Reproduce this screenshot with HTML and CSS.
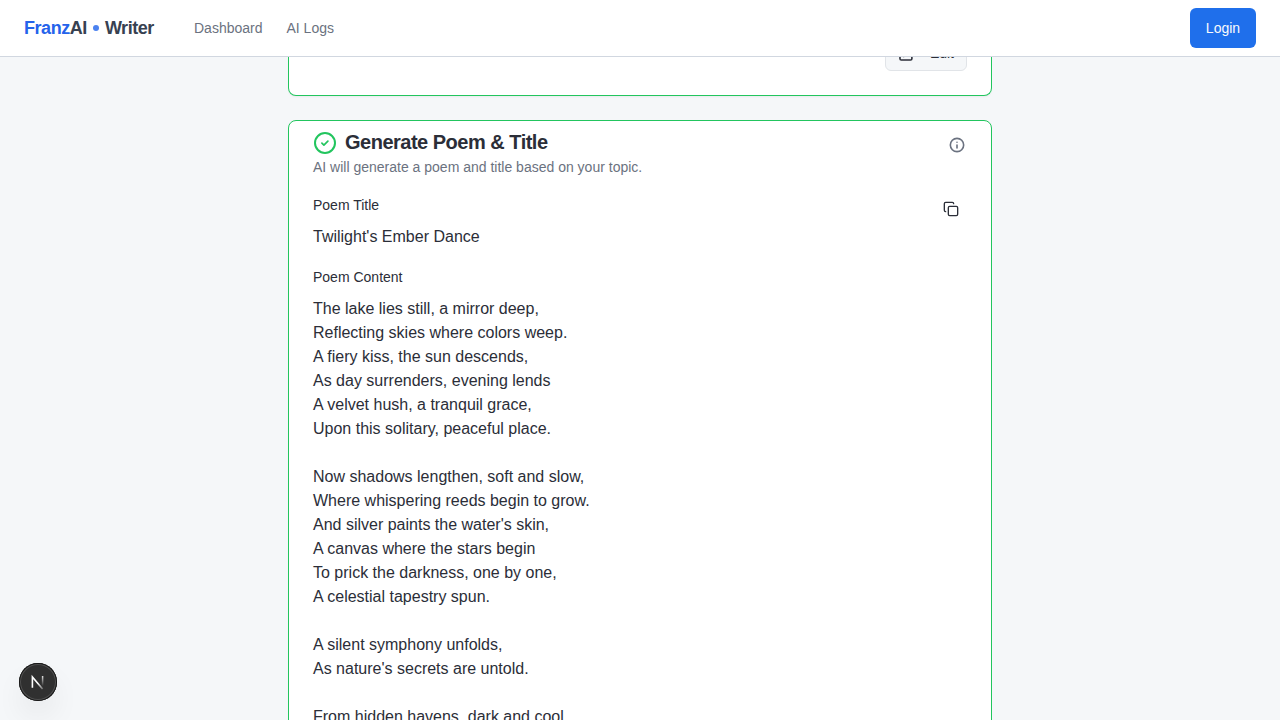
FILE: index.html
```html
<!DOCTYPE html>
<html lang="en">
<head>
<meta charset="utf-8">
<title>FranzAI Writer</title>
<link rel="stylesheet" href="styles.css">
</head>
<body>
<header class="topbar">
  <div class="brand"><span class="brand-blue">Franz</span><span>AI</span><span class="brand-dot"></span><span class="brand-writer">Writer</span></div>
  <nav class="nav"><a class="nav-dash">Dashboard</a><a class="nav-logs">AI Logs</a></nav>
  <button class="login"><span>Login</span></button>
</header>
<main class="content">
  <section class="card card-prev">
    <button class="edit">
      <svg class="edit-icon" width="16" height="16" viewBox="0 0 24 24" fill="none" stroke="currentColor" stroke-width="2.4" stroke-linecap="round" stroke-linejoin="round"><path d="M12 3H5a2 2 0 0 0-2 2v14a2 2 0 0 0 2 2h14a2 2 0 0 0 2-2v-7"/><path d="M18.4 2.6a1 1 0 0 1 3 3l-9 9-4 1 1-4z"/></svg>
      <span>Edit</span>
    </button>
  </section>
  <section class="card card-poem">
    <div class="card-head">
      <svg class="check" width="24" height="24" viewBox="0 0 24 24" fill="none" stroke="currentColor" stroke-width="2" stroke-linecap="round" stroke-linejoin="round"><circle cx="12" cy="12" r="10"/><path d="m8.9 12.2 2 1.9 4-3.9" stroke-width="1.7"/></svg>
      <h2 class="title"><span>Generate Poem &amp; Title</span></h2>
      <svg class="info" width="16" height="16" viewBox="0 0 24 24" fill="none" stroke="currentColor" stroke-width="2.4" stroke-linecap="round" stroke-linejoin="round"><circle cx="12" cy="12" r="10"/><path d="M12 16.5V12M12 7.8h.01"/></svg>
    </div>
    <p class="subtitle"><span>AI will generate a poem and title based on your topic.</span></p>
    <div class="fields">
      <div class="field-list">
        <h3 class="label">Poem Title</h3>
        <p class="value">Twilight's Ember Dance</p>
        <h3 class="label label-next">Poem Content</h3>
        <p class="value poem">The lake lies still, a mirror deep,
Reflecting skies where colors weep.
A fiery kiss, the sun descends,
As day surrenders, evening lends
A velvet hush, a tranquil grace,
Upon this solitary, peaceful place.

Now shadows lengthen, soft and slow,
Where whispering reeds begin to grow.
And silver paints the water's skin,
A canvas where the stars begin
To prick the darkness, one by one,
A celestial tapestry spun.

A silent symphony unfolds,
As nature's secrets are untold.

From hidden havens, dark and cool,</p>
      </div>
      <svg class="copy" width="16" height="16" viewBox="0 0 24 24" fill="none" stroke="currentColor" stroke-width="2" stroke-linecap="round" stroke-linejoin="round"><rect x="8" y="8" width="14" height="14" rx="2"/><path d="M4 16c-1.1 0-2-.9-2-2V4c0-1.1.9-2 2-2h10c1.1 0 2 .9 2 2"/></svg>
    </div>
  </section>
</main>
<div class="dev-badge">
  <svg width="38" height="38" viewBox="0 0 38 38" fill="none">
    <defs>
      <linearGradient id="diag" gradientUnits="userSpaceOnUse" x1="19" y1="20" x2="25" y2="27"><stop stop-color="#fff"/><stop offset="1" stop-color="#fff" stop-opacity=".15"/></linearGradient>
      <linearGradient id="stem" gradientUnits="userSpaceOnUse" x1="24" y1="13" x2="24" y2="23"><stop stop-color="#fff" stop-opacity=".85"/><stop offset="1" stop-color="#fff" stop-opacity="0"/></linearGradient>
    </defs>
    <path d="M13.4 24.8V14L23.6 26" stroke="url(#diag)" stroke-width="1.6"/>
    <path d="M23.6 13v10" stroke="url(#stem)" stroke-width="1.5"/>
  </svg>
</div>
</body>
</html>
```
FILE: styles.css
```css
* { box-sizing: border-box; }
body { margin: 0; height: 720px; overflow: hidden; background: #f5f7f9; color: #2b2e38; font-family: "Liberation Sans", Arial, sans-serif; }
h2, h3, p { margin: 0; }
button { font: inherit; }
.topbar { position: sticky; top: 0; z-index: 5; display: flex; align-items: center; height: 57px; padding: 0 24px; background: #fff; border-bottom: 1px solid #d1d7e0; }
.brand { display: flex; align-items: center; width: 130px; font-size: 18px; line-height: 28px; font-weight: 700; letter-spacing: -.45px; color: #374151; white-space: nowrap; }
.brand-blue { color: #2563eb; }
.brand-dot { width: 6px; height: 6px; margin: 0 6px; border-radius: 50%; background: #4b82f0; }
.nav { display: flex; gap: 24px; margin-left: 40px; font-size: 14px; line-height: 20px; color: #6b7280; }
.login { width: 66px; height: 40px; margin-left: auto; padding: 0; border: 0; border-radius: 6px; background: #1f6feb; color: #f8fafc; font-size: 14px; }
.content { width: 704px; height: 720px; overflow: hidden; margin: -57px auto 0; }
.card { background: #fff; border: 1px solid #22c55e; border-radius: 8px; box-shadow: 0 1px 2px rgba(0,0,0,.05); }
.card-prev { display: flex; justify-content: flex-end; align-items: flex-end; height: 96px; padding: 24px; border-top: 0; }
.edit { display: flex; align-items: center; gap: 16px; width: 82px; height: 36px; padding: 0 12px; border: 1px solid #e1e4e8; border-radius: 6px; background: #f5f7f9; color: #2b2e38; font-size: 14px; }
.edit-icon { margin-top: 1px; }
.card-poem { height: 760px; margin-top: 24px; padding: 8px 24px 0; }
.card-head { display: flex; height: 28px; align-items: center; }
.check { color: #22c55e; }
.title { margin: -2px 0 0 8px; font-size: 20px; line-height: 28px; letter-spacing: -.5px; }
.info { margin: 4px 2px 0 auto; color: #6b7280; }
.subtitle { font-size: 14px; line-height: 20px; color: #6b7280; }
.fields { display: flex; justify-content: space-between; padding-top: 18px; }
.label { font-size: 14px; line-height: 20px; font-weight: 400; }
.label-next { margin-top: 18px; }
.value { margin-top: 10px; font-size: 16px; line-height: 24px; }
.poem { white-space: pre-line; }
.copy { margin: 6px 8px 0 0; }
.dev-badge { position: fixed; left: 19px; bottom: 19px; width: 38px; height: 38px; border-radius: 50%; background: #303030; box-shadow: inset 0 0 0 1px #171717, inset 0 0 0 2px #505050, 0 16px 32px -8px rgba(0,0,0,.16); }
.dev-badge svg { display: block; }
```
